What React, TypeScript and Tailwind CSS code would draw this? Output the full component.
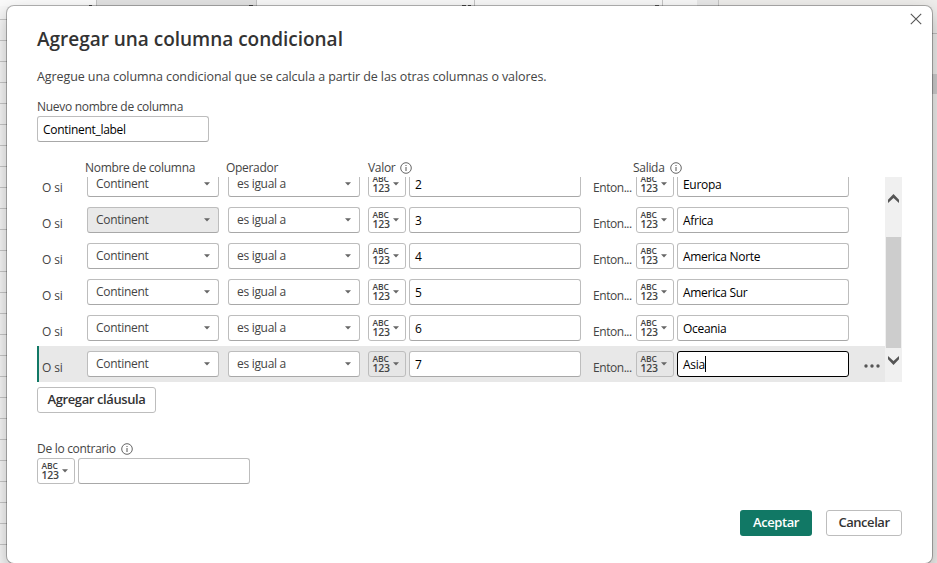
import React from "react";

const rows = [
  { value: "2", output: "Europa" },
  { value: "3", output: "Africa", hovered: true },
  { value: "4", output: "America Norte" },
  { value: "5", output: "America Sur" },
  { value: "6", output: "Oceania" },
  { value: "7", output: "Asia", active: true },
];

function Info() {
  return (
    <svg width="12" height="12" viewBox="0 0 12 12" fill="none" stroke="#555" className="shrink-0">
      <circle cx="6" cy="6" r="5.3" strokeWidth="0.9" />
      <path d="M6 5v4M6 3v1" strokeWidth="1" />
    </svg>
  );
}

function Arrow({ className = "" }: { className?: string }) {
  return (
    <svg width="6" height="4" viewBox="0 0 6 4" fill="#666" className={`shrink-0 ${className}`}>
      <path d="M0 0.2h6L3 3.4z" />
    </svg>
  );
}

function Select({ label, shaded = false }: { label: string; shaded?: boolean }) {
  return (
    <div className={`flex h-[26px] w-[132px] shrink-0 items-center justify-between rounded-[3px] border border-[#bdbdbd] border-b-[#a8a8a8] pr-[8px] pl-[8px] text-[#444] ${shaded ? "bg-[#e9e9e9]" : "bg-white"}`}>
      <span className="leading-[24px]">{label}</span>
      <Arrow />
    </div>
  );
}

function TypePicker({ shaded = false }: { shaded?: boolean }) {
  return (
    <div className={`flex h-[26px] w-[38px] shrink-0 items-center rounded-[3px] border border-[#bdbdbd] pl-[3.5px] ${shaded ? "bg-[#e6e6e6]" : "bg-white"}`}>
      <div className="flex w-[20.5px] flex-col pb-[2px] font-semibold text-[#444]">
        <span className="text-[8.5px] leading-[9px] tracking-[-0.1px]">ABC</span>
        <span className="text-[10.5px] leading-[10px] tracking-[-0.2px]">123</span>
      </div>
      <Arrow />
    </div>
  );
}

function TextBox({ text, active = false }: { text: string; active?: boolean }) {
  return (
    <div className={`flex h-[26px] w-[172px] shrink-0 items-center rounded-[3px] border bg-white pl-[5px] text-black ${active ? "border-black" : "border-[#bdbdbd] border-b-[#a8a8a8]"}`}>
      <span className="pt-px leading-[23px]">{text}</span>
      {active && <span className="h-[16px] w-px bg-black" />}
    </div>
  );
}

export default function App() {
  return (
    <div className="relative h-[563px] w-[937px] overflow-hidden bg-[#f7f7f7] font-['Open_Sans','Noto_Sans',sans-serif] text-[12px] tracking-[-0.3px] text-[#444]">
      <div className="flex h-[6px]">
        <div className="flex w-[97px] items-end justify-end border-r border-[#c4c4c4] bg-[#fafafa] pr-[4px]">
          <div className="h-px w-[3px] bg-[#555]" />
        </div>
        <div className="flex w-[160px] items-end justify-end border-r border-[#c4c4c4] bg-[#e2e2e2] pr-[3px]">
          <div className="h-px w-[4px] bg-[#555]" />
        </div>
        <div className="flex w-[218px] items-end justify-end gap-[2px] border-r border-[#c4c4c4] pr-[3px]">
          <div className="h-px w-[4px] bg-[#555]" />
          <div className="h-px w-[3px] bg-[#555]" />
        </div>
        <div className="flex w-[188px] items-end justify-end border-r border-[#c4c4c4] pr-[3px]">
          <div className="h-px w-[4px] bg-[#666]" />
        </div>
        <div className="w-[34px]" />
        <div className="w-[22px] border-r border-[#c4c4c4] bg-[#e8e8e8]" />
        <div className="flex-1 bg-[#eeedeb]" />
      </div>
      <div className="flex h-[557px] justify-between">
        <div className="w-[8px] pt-[13px]">
          {Array.from({ length: 26 }, (_, i) => (
            <div key={i} className="h-[21px] border-t border-[#c8c8c8]" />
          ))}
        </div>
        <div className="w-[8px] bg-[#eeedeb]">
          <div className="h-[28px] border-b border-[#c0c0c0]" />
          <div className="h-[40px]" />
          <div className="h-[20px] bg-[#cdcdcd]" />
        </div>
      </div>
      <div className="absolute top-[5px] left-[6px] flex h-[559px] w-[927px] flex-col rounded-[8px] border border-black/28 bg-white bg-clip-padding pl-[30px] shadow-[0_8px_18px_rgba(0,0,0,0.26)]">
        <svg width="12" height="12" viewBox="0 0 12 12" stroke="#555" strokeWidth="1.1" className="absolute top-[7px] right-[10px]">
          <path d="M.8.8l10.4 10.4M11.2.8L.8 11.2" />
        </svg>
        <h1 className="mt-[18px] h-[30px] text-[19px] leading-[30px] font-semibold tracking-[-0.02px] text-[#333]">Agregar una columna condicional</h1>
        <p className="mt-[14px] h-[18px] text-[12.5px] leading-[18px] tracking-[-0.09px]">Agregue una columna condicional que se calcula a partir de las otras columnas o valores.</p>
        <label className="mt-[12px] h-[18px] leading-[18px]">Nuevo nombre de columna</label>
        <div>
          <TextBox text="Continent_label" />
        </div>
        <div className="mt-[17px] flex h-[18px] leading-[18px]">
          <span className="ml-[48px] w-[141px]">Nombre de columna</span>
          <span className="w-[142px]">Operador</span>
          <span className="flex w-[265px] items-center gap-[5px]">Valor <Info /></span>
          <span className="flex items-center gap-[5px]">Salida <Info /></span>
        </div>
        <div className="flex h-[205px] w-[865px] flex-none overflow-hidden">
          <div className="-mt-[11px] w-[848px]">
            {rows.map((row) => (
              <div key={row.value} className={`flex h-[36px] pt-[5px] ${row.active ? "border-l-2 border-[#117865] bg-[#e8e8e8] pl-[3px]" : "pl-[5px]"}`}>
                <span className="mt-[8px] w-[45px] shrink-0 leading-[18px] tracking-[-0.15px]">O si</span>
                <Select label="Continent" shaded={row.hovered} />
                <div className="ml-[9px]"><Select label="es igual a" /></div>
                <div className="ml-[8px]"><TypePicker shaded={row.active} /></div>
                <div className="ml-[3px]"><TextBox text={row.value} /></div>
                <span className="mt-[8px] ml-[12px] w-[43px] shrink-0 leading-[18px] tracking-[-0.45px]">Enton...</span>
                <TypePicker shaded={row.active} />
                <div className="ml-[3px]"><TextBox text={row.output} active={row.active} /></div>
                {row.active && (
                  <svg width="16" height="4" viewBox="0 0 16 4" fill="#555" className="mt-[13px] ml-[15px]">
                    <circle cx="2" cy="2" r="1.7" /><circle cx="8" cy="2" r="1.7" /><circle cx="14" cy="2" r="1.7" />
                  </svg>
                )}
              </div>
            ))}
          </div>
          <div className="flex w-[17px] flex-col items-center bg-[#f0f0f0]">
            <svg width="11" height="9" viewBox="0 0 11 9" fill="#555" className="mt-[17px]">
              <path d="M5.5 0L11 5.7V9L5.5 3.9L0 9V5.7z" />
            </svg>
            <div className="mt-[34px] h-[111px] w-[15px] bg-[#cdcdcd]" />
            <svg width="11" height="9" viewBox="0 0 11 9" fill="#555" className="mt-[8px]">
              <path d="M5.5 9L11 3.3V0L5.5 5.1L0 0V3.3z" />
            </svg>
          </div>
        </div>
        <button className="mt-[5px] h-[26px] w-[119px] flex-none rounded-[3px] border border-[#bdbdbd] pb-px text-[13px] leading-[23px] font-semibold tracking-[-0.4px] text-[#333]">Agregar cláusula</button>
        <label className="mt-[27px] flex h-[18px] items-center gap-[5px] leading-[18px]">De lo contrario <Info /></label>
        <div className="flex gap-[3px]">
          <TypePicker />
          <TextBox text="" />
        </div>
        <div className="mt-[26px] mr-[30px] flex justify-end gap-[14px] text-[13px] font-semibold tracking-[-0.45px]">
          <button className="h-[26px] w-[72px] rounded-[3px] bg-[#117865] pb-px leading-[25px] text-white">Aceptar</button>
          <button className="h-[26px] w-[76px] rounded-[3px] border border-[#bdbdbd] pb-px leading-[23px] text-[#333]">Cancelar</button>
        </div>
      </div>
    </div>
  );
}
